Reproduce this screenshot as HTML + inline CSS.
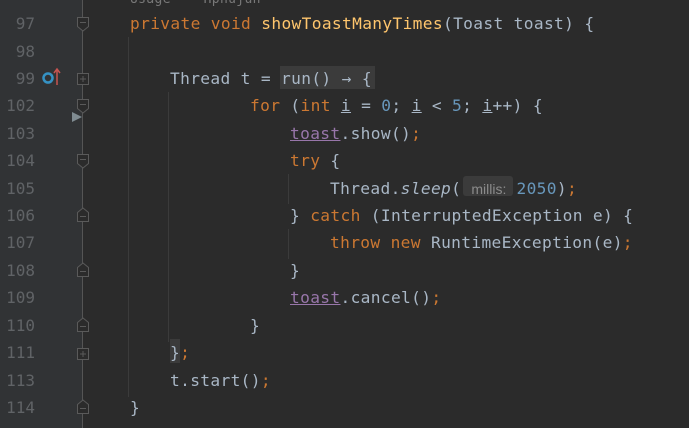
<!DOCTYPE html><html><head><style>
body{margin:0;width:689px;height:428px;overflow:hidden;background:#2b2b2b;position:relative;font-family:"DejaVu Sans Mono","Liberation Mono",monospace;}
.gut{position:absolute;left:0;top:0;width:82px;height:428px;background:#313335}
.vl{position:absolute;left:82px;top:0;width:1px;height:428px;background:#555}
.ig{position:absolute;width:1px;background:#3b3b3b}
.ln{position:absolute;left:0;width:35px;text-align:right;color:#606366;font-size:16px;line-height:27px;font-family:"DejaVu Sans Mono",monospace;margin-top:1px}
.cl{position:absolute;white-space:pre;font-size:16.2px;line-height:27px;color:#a9b7c6;letter-spacing:0.35px;margin-top:1px}
.k{color:#cc7832}.f{color:#ffc66d}.n{color:#6897bb}.p{color:#9876aa}.u{text-decoration:underline}
</style></head><body>
<div class="gut"></div><div class="vl"></div>
<div class="ig" style="left:128px;top:37px;height:360px"></div>
<div class="ig" style="left:168px;top:92px;height:250px"></div>
<div class="ig" style="left:288px;top:174px;height:30px"></div>
<div class="ig" style="left:288px;top:229px;height:30px"></div>
<div class="cl" style="top:-15px;left:130px;color:#787878;font-size:13px">Usage    Hphujun</div>
<div class="ln" style="top:9px">97</div>
<div class="ln" style="top:37px">98</div>
<div class="ln" style="top:64px">99</div>
<div class="ln" style="top:91px">102</div>
<div class="ln" style="top:119px">103</div>
<div class="ln" style="top:146px">104</div>
<div class="ln" style="top:174px">105</div>
<div class="ln" style="top:201px">106</div>
<div class="ln" style="top:228px">107</div>
<div class="ln" style="top:256px">108</div>
<div class="ln" style="top:283px">109</div>
<div class="ln" style="top:311px">110</div>
<div class="ln" style="top:338px">111</div>
<div class="ln" style="top:366px">113</div>
<div class="ln" style="top:393px">114</div>
<svg style="position:absolute;left:0;top:0" width="100" height="428">
<circle cx="48" cy="78" r="4.5" fill="none" stroke="#3592c4" stroke-width="2.5"/>
<path d="M57 85V70M54 73l3-4 3 4" stroke="#c75450" stroke-width="1.5" fill="none"/>
<polygon points="72,112 82,117 72,122" fill="#7f8b91"/>
<g fill="#2b2b2b" stroke="#5a5a5a" stroke-width="1">
<path d="M77.5 17.5h11v9l-5.5 4.5-5.5-4.5z"/><path d="M80 22.5h6"/>
<path d="M77.5 99.5h11v9l-5.5 4.5-5.5-4.5z"/><path d="M80 104.5h6"/>
<path d="M77.5 154.5h11v9l-5.5 4.5-5.5-4.5z"/><path d="M80 159.5h6"/>
<rect x="77.5" y="73.5" width="11" height="11"/><path d="M80 79h6M83 76v6"/>
<rect x="77.5" y="348.5" width="11" height="11"/><path d="M80 354h6M83 351v6"/>
<path d="M77.5 221.5h11v-9l-5.5-4.5-5.5 4.5z"/><path d="M80 216.5h6"/>
<path d="M77.5 276.5h11v-9l-5.5-4.5-5.5 4.5z"/><path d="M80 271.5h6"/>
<path d="M77.5 331.5h11v-9l-5.5-4.5-5.5 4.5z"/><path d="M80 326.5h6"/>
<path d="M77.5 413.5h11v-9l-5.5-4.5-5.5 4.5z"/><path d="M80 408.5h6"/>
</g></svg>
<div style="position:absolute;left:280px;top:66px;width:95px;height:23px;background:#3b3b3b"></div>
<div style="position:absolute;left:170px;top:339px;width:10px;height:24px;background:#3b3b3b"></div>
<div style="position:absolute;left:463px;top:176px;width:50px;height:20px;background:#3b3b3b;border-radius:3px"></div>
<div class="cl" style="top:9px;left:130px"><span class="k">private void </span><span class="f">showToastManyTimes</span>(Toast toast) {</div>
<div class="cl" style="top:64px;left:170px">Thread t = run() → {</div>
<div class="cl" style="top:91px;left:250px"><span class="k">for </span>(<span class="k">int </span><span class="u">i</span> = <span class="n">0</span>; <span class="u">i</span> &lt; <span class="n">5</span>; <span class="u">i</span>++) {</div>
<div class="cl" style="top:119px;left:290px"><span class="p u">toast</span>.show()<span class="k">;</span></div>
<div class="cl" style="top:146px;left:290px"><span class="k">try </span>{</div>
<div class="cl" style="top:174px;left:330px">Thread.<i>sleep</i>( <span style="font-family:'Liberation Sans',sans-serif;font-size:14px;color:#8c8c8c;letter-spacing:0">millis:</span> <span class="n">2050</span>)<span class="k">;</span></div>
<div class="cl" style="top:201px;left:290px">} <span class="k">catch </span>(InterruptedException e) {</div>
<div class="cl" style="top:228px;left:330px"><span class="k">throw new </span>RuntimeException(e)<span class="k">;</span></div>
<div class="cl" style="top:256px;left:290px">}</div>
<div class="cl" style="top:283px;left:290px"><span class="p u">toast</span>.cancel()<span class="k">;</span></div>
<div class="cl" style="top:311px;left:250px">}</div>
<div class="cl" style="top:338px;left:170px">}<span class="k">;</span></div>
<div class="cl" style="top:366px;left:170px">t.start()<span class="k">;</span></div>
<div class="cl" style="top:393px;left:130px">}</div>
</body></html>
